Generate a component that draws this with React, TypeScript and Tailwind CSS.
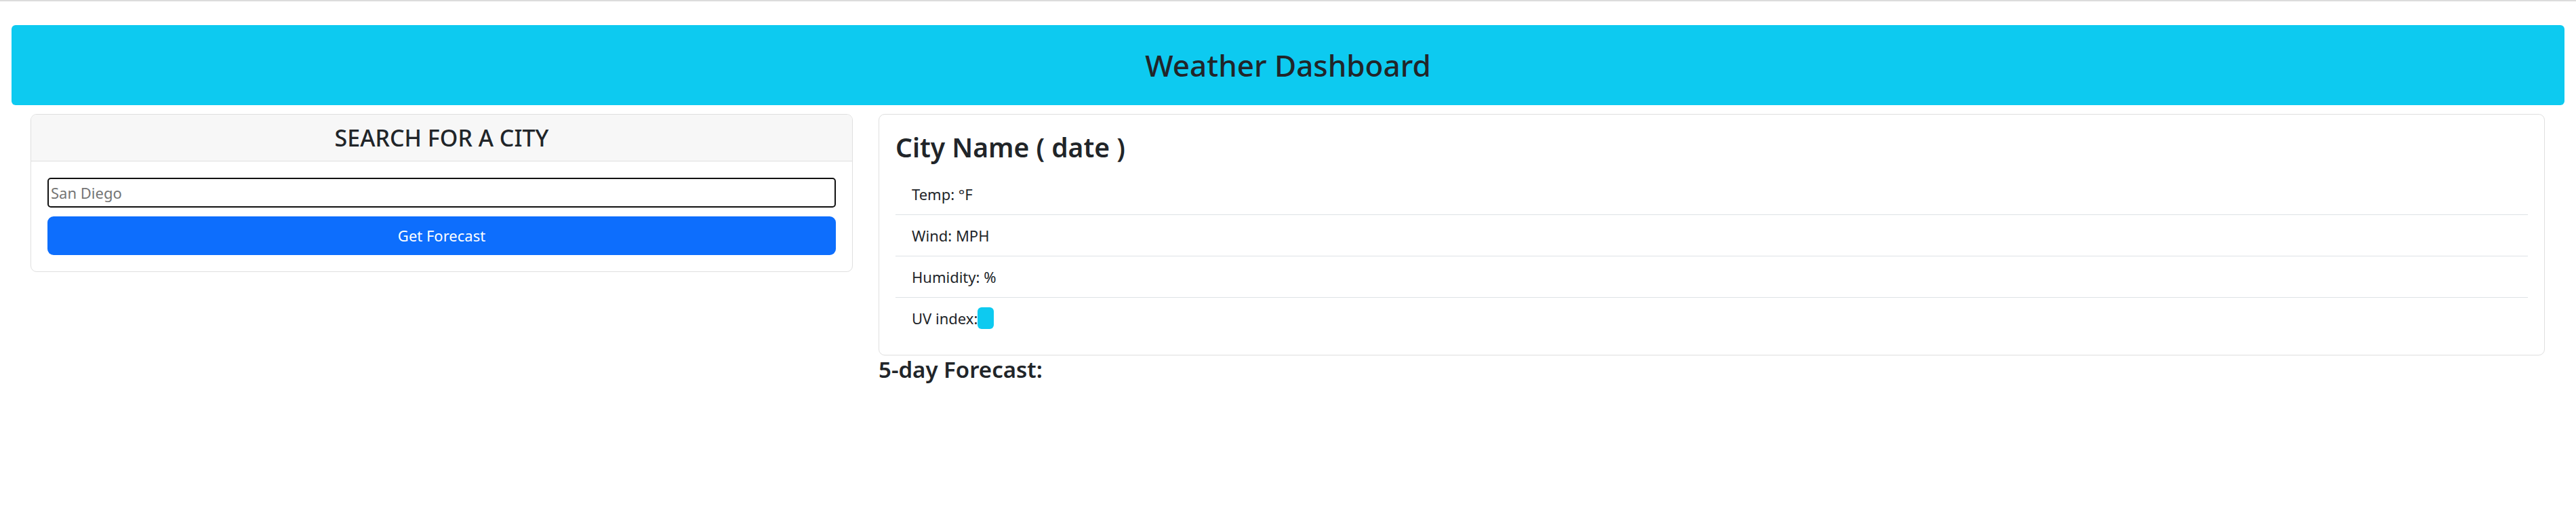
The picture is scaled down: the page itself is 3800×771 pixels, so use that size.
import React from 'react';

const App = () => {
  const details = [
    { label: 'Temp: °F' },
    { label: 'Wind: MPH' },
    { label: 'Humidity: %' },
  ];

  return (
    <div className="min-h-screen bg-white font-['Noto_Sans','Open_Sans',sans-serif] text-[#212529]">
      <div className="h-[2px] bg-[#dcdcdc]"></div>

      <header className="mx-[17px] mt-[35px] flex h-[118px] items-center justify-center rounded-[6px] bg-[#0dcaf0]">
        <h1 className="text-[44px] leading-none font-medium">Weather Dashboard</h1>
      </header>

      <main className="mt-[13px] flex items-start gap-[38px] pr-[46px] pl-[45px]">
        {/* search card */}
        <section className="w-[1213px] shrink-0 overflow-hidden rounded-[9px] border border-[#dfdfdf]">
          <div className="flex h-[69px] items-center justify-center border-b border-[#dfdfdf] bg-[#f7f7f7]">
            <h3 className="text-[34px] leading-none font-medium">SEARCH FOR A CITY</h3>
          </div>
          <div className="p-[24px]">
            <input
              type="text"
              placeholder="San Diego"
              className="block h-[44px] w-full rounded-[5px] border-2 border-[#111] px-[3px] text-[22px] outline-none placeholder:text-[#757575]"
            />
            <button className="mt-[13px] h-[57px] w-full rounded-[9px] bg-[#0d6efd] text-[22px] text-white">
              Get Forecast
            </button>
          </div>
        </section>

        {/* current weather */}
        <div className="flex-1">
          <section className="rounded-[9px] border border-[#dfdfdf] p-[24px]">
            <h2 className="mb-[15px] text-[39px] leading-[48px] font-semibold">City Name ( date )</h2>
            <ul>
              {details.map((d) => (
                <li key={d.label} className="flex h-[61px] items-center border-b border-[#dee2e6] px-[24px] text-[22px]">
                  {d.label}
                </li>
              ))}
              <li className="flex h-[60px] items-center px-[24px] text-[22px]">
                UV index:<span className="inline-block h-[32px] w-[24px] rounded-[6px] bg-[#0dcaf0]"></span>
              </li>
            </ul>
          </section>
          <h3 className="text-[33px] leading-[42px] font-semibold">5-day Forecast:</h3>
        </div>
      </main>
    </div>
  );
};

export default App;
